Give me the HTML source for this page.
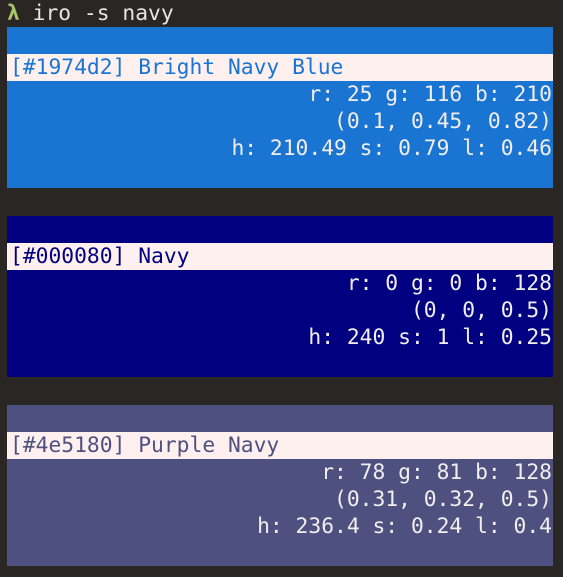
<!DOCTYPE html>
<html><head><style>
body{margin:0;background:#2a2624;width:563px;height:577px;overflow:hidden;font-family:"DejaVu Sans Mono","Liberation Mono",monospace;font-size:21.3px;}
.p{position:absolute;left:7px;top:0;height:27px;line-height:27px;color:#e8e4e0;white-space:pre}
.l{color:#a6c46a;font-weight:bold}
.b{position:absolute;left:7px;width:546px;height:161px}
.r{height:27px;line-height:27px;white-space:pre;padding:0 1px 0 3px;color:#f2eeee;text-align:right}
.w{background:#fff0f0;text-align:left;height:27px}
</style></head><body>
<div class="p"><span class="l">λ</span> iro -s navy</div>
<div class="b" style="top:27px;background:#1974d2">
<div class="r"></div><div class="r w" style="color:#1974d2">[#1974d2] Bright Navy Blue</div>
<div class="r">r: 25 g: 116 b: 210</div><div class="r">(0.1, 0.45, 0.82)</div><div class="r">h: 210.49 s: 0.79 l: 0.46</div></div>
<div class="b" style="top:216px;background:#000080">
<div class="r"></div><div class="r w" style="color:#000080">[#000080] Navy</div>
<div class="r">r: 0 g: 0 b: 128</div><div class="r">(0, 0, 0.5)</div><div class="r">h: 240 s: 1 l: 0.25</div></div>
<div class="b" style="top:405px;background:#4e5180">
<div class="r"></div><div class="r w" style="color:#4e5180">[#4e5180] Purple Navy</div>
<div class="r">r: 78 g: 81 b: 128</div><div class="r">(0.31, 0.32, 0.5)</div><div class="r">h: 236.4 s: 0.24 l: 0.4</div></div>
</body></html>
